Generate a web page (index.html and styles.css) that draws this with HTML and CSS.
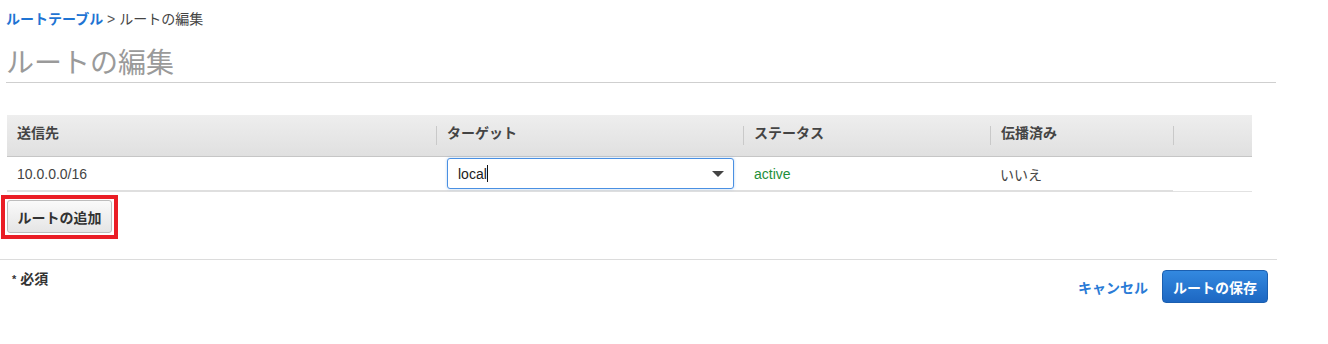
FILE: index.html
```html
<!DOCTYPE html>
<html>
<head>
  <title>ルートの編集</title>
  <link rel="stylesheet" href="styles.css">
</head>
<body>
  <div class="breadcrumb">
    <a class="crumb-link" href="#">ルートテーブル</a>
    <span class="crumb-sep">&gt;</span>
    <span class="crumb-current">ルートの編集</span>
  </div>
  <h1 class="page-title">ルートの編集</h1>

  <div class="routes">
    <div class="routes-head">
      <div class="head-cell first"><span class="head-label">送信先</span></div>
      <div class="head-cell"><span class="head-label">ターゲット</span></div>
      <div class="head-cell"><span class="head-label">ステータス</span></div>
      <div class="head-cell"><span class="head-label">伝播済み</span></div>
      <div class="head-cell"></div>
    </div>
    <div class="routes-row">
      <div class="row-cell dest">10.0.0.0/16</div>
      <div class="row-cell target">
        <div class="combo">
          <span class="combo-text">local</span><span class="caret"></span>
          <svg class="combo-arrow" width="12" height="6" viewBox="0 0 12 6">
            <path d="M0 0 L12 0 L6 6 Z" fill="#444"/>
          </svg>
        </div>
      </div>
      <div class="row-cell status">active</div>
      <div class="row-cell propagated">いいえ</div>
      <div class="row-cell last"></div>
    </div>
  </div>

  <!-- red box is a highlight around the add button -->
  <div class="highlight">
    <button type="button" class="add-button">ルートの追加</button>
  </div>

  <div class="footer">
    <div class="required"><span class="star">*</span> 必須</div>
    <div class="actions">
      <a class="cancel-link" href="#">キャンセル</a>
      <button type="button" class="save-button">ルートの保存</button>
    </div>
  </div>
</body>
</html>
```

FILE: styles.css
```css
body {
  margin: 0;
  background-color: #fff;
  font-family: "Liberation Sans", "Noto Sans CJK JP", sans-serif;
  font-size: 14px;
  color: #444;
}

.breadcrumb {
  padding: 10px 0 0 6px;
  line-height: 18px;
  color: #444;
}

.crumb-link {
  color: #1f74d3;
  font-weight: bold;
  text-decoration: none;
}

.crumb-sep {
  color: #555;
}

.page-title {
  margin: 18px 0 0 6px;
  width: 1270px;
  font-size: 28px;
  font-weight: normal;
  line-height: 36px;
  color: #9a9a9a;
  border-bottom: 1px solid #cfcfcf;
}

/* route table */
.routes {
  margin: 32px 0 0 7px;
  width: 1245px;
}

.routes-head,
.routes-row {
  display: grid;
  grid-template-columns: 429px 307px 247px 183px 79px;
}

.routes-head {
  height: 41px;
  background: linear-gradient(#eeeeee, #e0e0e0);
  border-bottom: 1px solid #c6c6c6;
}

.head-cell {
  display: flex;
  align-items: center;
  font-weight: bold;
  color: #444;
}

.head-cell::before {
  content: "";
  width: 1px;
  height: 19px;
  background-color: #c9c9c9;
  margin-right: 10px;
}

.head-cell.first {
  padding-left: 10px;
}

.head-cell.first::before {
  display: none;
}

.head-label {
  line-height: 18px;
  margin-bottom: 6px;
}

.routes-row {
  height: 35px;
}

.row-cell {
  display: flex;
  align-items: center;
  padding-left: 10px;
  border-bottom: 2px solid #dfdfdf;
  color: #444;
}

.row-cell.target,
.row-cell.status {
  padding-left: 11px;
}

.row-cell.status {
  color: #1d8f3b;
}

.row-cell.last {
  border-bottom: 1px solid #e2e2e2;
}

.combo {
  box-sizing: border-box;
  width: 287px;
  height: 31px;
  display: flex;
  align-items: center;
  padding: 0 9px 0 10px;
  border: 1px solid #4a90e2;
  border-radius: 3px;
  box-shadow: 0 0 3px rgba(74, 144, 226, 0.4);
  background-color: #fff;
}

.combo-text {
  color: #222;
}

.caret {
  width: 1px;
  height: 17px;
  background-color: #111;
}

.combo-arrow {
  margin-left: auto;
}

/* add route */
.highlight {
  display: inline-block;
  margin: 3px 0 0 1px;
  padding: 1px 2px 2px 2px;
  border: 4px solid #ea1d25;
}

.add-button {
  display: block;
  width: 105px;
  height: 33px;
  padding: 0;
  border: 1px solid #bdbdbd;
  border-radius: 3px;
  background: linear-gradient(#fafafa, #e5e5e5);
  font-family: inherit;
  font-size: 14px;
  font-weight: bold;
  color: #333;
  cursor: pointer;
}

/* footer */
.footer {
  margin-top: 20px;
  width: 1277px;
  box-sizing: border-box;
  padding: 10px 9px 0 12px;
  border-top: 1px solid #dcdcdc;
  display: flex;
  justify-content: space-between;
  align-items: flex-start;
}

.required {
  line-height: 18px;
  font-weight: bold;
  color: #333;
}

.star {
  font-size: 11px;
  vertical-align: top;
}

.actions {
  display: flex;
  align-items: center;
}

.cancel-link {
  color: #2a7bd6;
  font-weight: bold;
  text-decoration: none;
  margin-right: 14px;
}

.save-button {
  width: 106px;
  height: 33px;
  padding: 0;
  border: 1px solid #1b5fb0;
  border-radius: 4px;
  background: linear-gradient(#3389e0, #1d67c2);
  font-family: inherit;
  font-size: 14px;
  font-weight: bold;
  color: #fff;
  cursor: pointer;
}
```
